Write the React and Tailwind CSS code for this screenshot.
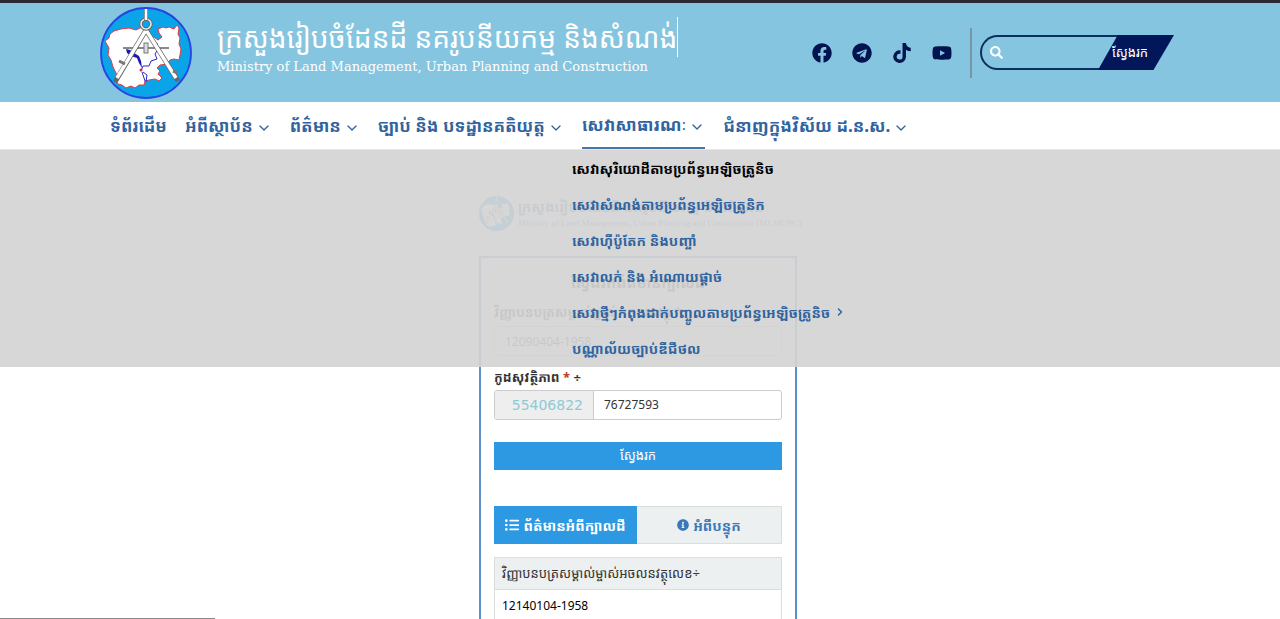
import { useState } from "react";
import { FaFacebook, FaTelegram, FaTiktok, FaYoutube, FaSearch, FaListUl, FaInfoCircle } from "react-icons/fa";
import { ChevronDown, ChevronRight } from "lucide-react";

const navItems = [
  { label: "ទំព័រដើម" },
  { label: "អំពីស្ថាប័ន", more: true },
  { label: "ព័ត៌មាន", more: true },
  { label: "ច្បាប់ និង បទដ្ឋានគតិយុត្ត", more: true },
  { label: "សេវាសាធារណៈ", more: true, open: true },
  { label: "ជំនាញក្នុងវិស័យ ដ.ន.ស.", more: true },
];

const services = [
  { label: "សេវាសុរិយោដីតាមប្រព័ន្ធអេឡិចត្រូនិច", active: true },
  { label: "សេវាសំណង់តាមប្រព័ន្ធអេឡិចត្រូនិក" },
  { label: "សេវាហ៊ីប៉ូតែក និងបញ្ចាំ" },
  { label: "សេវាលក់ និង អំណោយផ្តាច់" },
  { label: "សេវាថ្មីៗកំពុងដាក់បញ្ចូលតាមប្រព័ន្ធអេឡិចត្រូនិច", more: true },
  { label: "បណ្ណាល័យច្បាប់ឌីជីថល" },
];

const socials = [
  { name: "Facebook", Icon: FaFacebook },
  { name: "Telegram", Icon: FaTelegram },
  { name: "TikTok", Icon: FaTiktok },
  { name: "YouTube", Icon: FaYoutube },
];

/* ================= LOGO ================= */
function Logo({ className }) {
  return (
    <svg viewBox="0 0 92 92" className={className} aria-hidden="true">
      <circle cx="46" cy="46" r="45" fill="#0aa5e9" stroke="#2546e0" strokeWidth="1.8" />
      <path
        d="M5 34 L9 31 L10 27 L14 24 L21 22 L29 21 L36 23 L42 20 L47 24 L50 29 L54 30 L58 33 L62 30 L59 26 L58 22 L63 20 L66 21 L69 20 L74 22 L77 18 L79 21 L78 27 L80 31 L79 37 L81 42 L80 48 L79 53 L74 52 L70 53 L67 57 L60 58 L57 61 L60 64 L58 67 L62 71 L59 74 L55 72 L49 73 L45 74 L44 78 L39 78 L35 81 L31 79 L26 81 L22 78 L18 77 L15 73 L17 68 L13 60 L11 53 L8 48 L9 41 Z"
        fill="#fff" stroke="#e23b45" strokeWidth="1" strokeLinejoin="round"
      />
      <path d="M26 42 l4 1 l4 3 l5 3 l2 5 l1 7 l-3 -5 l-2 -5 l-6 -2 l-4 -3z" fill="#1a18b8" />
      <path d="M57 36 l1 6 l-3 5 l2 5 l-6 2 l-2 5 l-6 0 l-2 5 M43 65 l4 3 l-1 7 M42 65 l3 9" fill="none" stroke="#2a25cf" strokeWidth="1" />
      <path d="M23 41 H69" stroke="#898989" strokeWidth="1.8" />
      <path d="M46 23 L15 75 M46 23 L78 74" stroke="#666" strokeWidth="5" />
      <path d="M46 23 L17 71 M46 23 L76 71" stroke="#fff" strokeWidth="3.4" />
      <path d="M19 54 l6 3 M73 64 l5 2" stroke="#777" strokeWidth="3" />
      <rect x="44" y="36" width="4" height="10" fill="#ddd" stroke="#777" />
      <circle cx="46" cy="17" r="5" fill="none" stroke="#666" strokeWidth="3.4" />
      <circle cx="46" cy="17" r="5" fill="none" stroke="#e8e8e8" strokeWidth="1.6" />
      <path d="M46 2 V13" stroke="#777" strokeWidth="3.6" />
      <path d="M46 2 V13" stroke="#fff" strokeWidth="2.4" />
      <circle cx="41" cy="63" r="1.5" fill="#e02a3a" />
    </svg>
  );
}

/* ================= HEADER ================= */
function Header() {
  return (
    <header className="h-[102px] border-t-[3px] border-[#2c2937] bg-[#86c5e0]">
      <div className="mx-auto flex h-full max-w-[1080px] items-center justify-between pr-[6px]">
        <a href="#" className="flex items-center text-white">
          <Logo className="h-[92px] w-[92px]" />
          <div className="ml-[25px] pb-3">
            <div className="border-r border-white text-[28px] leading-10 whitespace-nowrap">
              ក្រសួងរៀបចំដែនដី នគរូបនីយកម្ម និងសំណង់
            </div>
            <div className="font-['DejaVu_Serif','Noto_Sans_Khmer',serif] text-[13px] leading-5 whitespace-nowrap">
              Ministry of Land Management, Urban Planning and Construction
            </div>
          </div>
        </a>

        <div className="flex items-center">
          <div className="flex gap-5 text-xl text-[#02144f]">
            {socials.map(({ name, Icon }) => (
              <a key={name} href="#" aria-label={name}>
                <Icon />
              </a>
            ))}
          </div>
          <form className="ml-[18px] flex h-[50px] items-center border-l-2 border-[#7795a5] pl-2">
            <div className="-mr-5 flex h-[35px] items-center rounded-l-full border-2 border-r-0 border-[#0b2f60] pl-2">
              <FaSearch className="text-[13px] text-white" />
              <input aria-label="ស្វែងរក" className="w-[115px] bg-transparent px-2 text-sm outline-none" />
            </div>
            <button
              type="button"
              className="relative h-[35px] w-[76px] bg-[#02165a] pr-3 text-[13px] text-white [clip-path:polygon(26%_0,100%_0,73%_100%,0_100%)]"
            >
              ស្វែងរក
            </button>
          </form>
        </div>
      </div>
    </header>
  );
}

/* ================= NAV ================= */
function Nav() {
  const [open, setOpen] = useState(true);

  return (
    <nav className="relative z-10 h-12 border-b border-[#e6e6e6] bg-white">
      <ul className="mx-auto flex h-full max-w-[1060px] gap-[18px] text-[17px] font-bold text-[#2f64a0]">
        {navItems.map((item) => (
          <li key={item.label} className={item.open ? "border-b-2 border-[#4a76ab]" : ""}>
            <a
              href="#"
              onClick={() => item.open && setOpen(!open)}
              className="flex h-full items-center gap-[3px] whitespace-nowrap"
            >
              {item.label}
              {item.more && <ChevronDown className="mt-1 size-4" />}
            </a>
          </li>
        ))}
      </ul>

      {open && (
        <div className="absolute inset-x-0 top-12 bg-[#d4d4d4]/92 pb-px">
          <ul className="mx-auto max-w-[1280px] pl-[572px] text-[14px] font-bold text-[#2f64a0]">
            {services.map((item) => (
              <li key={item.label}>
                <a
                  href="#"
                  className={`flex h-9 items-center gap-1 whitespace-nowrap ${item.active ? "text-black" : ""}`}
                >
                  {item.label}
                  {item.more && <ChevronRight className="size-3" strokeWidth={3} />}
                </a>
              </li>
            ))}
          </ul>
        </div>
      )}
    </nav>
  );
}

/* ================= LOOKUP FORM ================= */
function Lookup() {
  return (
    <main className="mx-auto w-[322px] pr-1 pt-[45px] text-[12px] text-[#333]">
      <div className="flex h-[36px] items-center gap-1 whitespace-nowrap text-[#3d6fb5]">
        <Logo className="size-[35px] shrink-0" />
        <div>
          <div className="text-[14px] leading-5 font-bold">ក្រសួងរៀបចំដែនដី នគរូបនីយកម្ម និងសំណង់</div>
          <div className="font-['Liberation_Serif',serif] text-[9px] leading-3">
            Ministry of Land Management, Urban Planning and Construction (MLMUPC)
          </div>
        </div>
      </div>

      <div className="mt-[25px] border-2 border-[#5c90ca] px-[13px] pb-4">
        <h1 className="pt-3 text-center text-[15px] leading-6 font-bold">ស្វែងរកព័ត៌មានក្បាលដី</h1>
        <label htmlFor="cert" className="mt-2 block text-[13px] leading-5 font-bold">
          វិញ្ញាបនបត្រសម្គាល់ម្ចាស់អចលនវត្ថុ *
        </label>
        <input
          id="cert"
          defaultValue="12090404-1958"
          className="mt-1 h-[30px] w-full rounded-[3px] border border-[#ccc] px-[10px]"
        />
        <label htmlFor="code" className="mt-[11px] block text-[13px] leading-5 font-bold">
          កូដសុវត្ថិភាព <span className="text-[#c0392b]">*</span> ÷
        </label>
        <div className="mt-[3px] flex h-[30px] overflow-hidden rounded-[3px] border border-[#ccc]">
          <span className="flex w-[99px] items-center justify-end border-r border-[#ccc] bg-[#eee] pr-[10px] font-['DejaVu_Sans',sans-serif] text-[14px] text-[#8ccbd6]">
            55406822
          </span>
          <input id="code" defaultValue="76727593" className="min-w-0 flex-1 px-[10px] outline-none" />
        </div>
        <button type="button" className="mt-[22px] h-7 w-full bg-[#2e99e3] text-[13px] text-white">
          ស្វែងរក
        </button>

        <div role="tablist" className="mt-9 flex h-[38px] text-[14px] font-bold whitespace-nowrap">
          <button
            role="tab"
            aria-selected="true"
            className="flex w-[143px] items-center justify-center gap-1 bg-[#2e99e3] text-white"
          >
            <FaListUl className="shrink-0" /> ព័ត៌មានអំពីក្បាលដី
          </button>
          <button
            role="tab"
            aria-selected="false"
            className="flex flex-1 items-center justify-center gap-1 border border-l-0 border-[#ddd] bg-[#ecf0f1] text-[#3a78b9]"
          >
            <FaInfoCircle className="text-[12px]" /> អំពីបន្ទុក
          </button>
        </div>

        <table className="mt-[13px] w-full border border-[#ddd] text-left">
          <thead>
            <tr className="h-8 border-b border-[#ddd] bg-[#ecf0f1]">
              <th className="px-[7px] text-[13px] font-normal whitespace-nowrap">
                វិញ្ញាបនបត្រសម្គាល់ម្ចាស់អចលនវត្ថុលេខ÷
              </th>
            </tr>
          </thead>
          <tbody>
            <tr className="h-8">
              <td className="px-[7px] text-black">12140104-1958</td>
            </tr>
          </tbody>
        </table>
      </div>
    </main>
  );
}

export default function App() {
  return (
    <div className="relative h-screen overflow-hidden bg-white font-['Noto_Sans','Noto_Sans_Khmer',sans-serif]">
      <Header />
      <Nav />
      <Lookup />
      <div className="absolute bottom-0 left-0 h-px w-[215px] bg-[#8a8a8a]" />
    </div>
  );
}
